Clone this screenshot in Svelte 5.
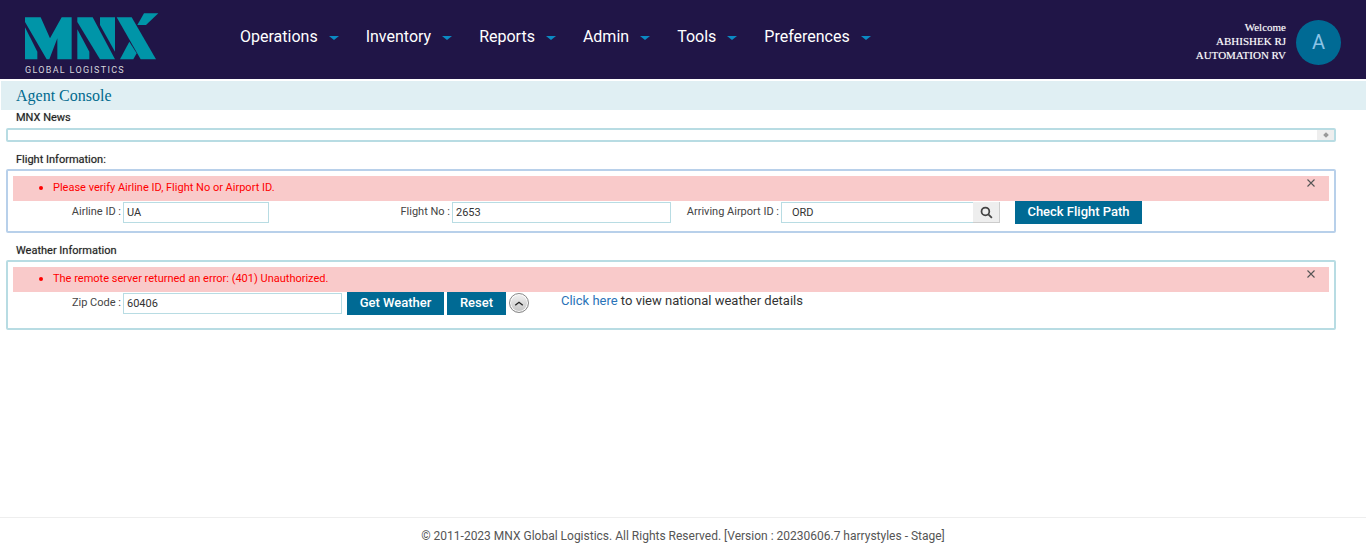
<script>
  const nav = ['Operations', 'Inventory', 'Reports', 'Admin', 'Tools', 'Preferences'];
</script>

<div class="page">
  <header class="topbar">
    <svg class="logo" viewBox="0 0 435 204" aria-label="MNX Global Logistics">
      <g fill="#0095a8">
        <polygon points="15,22 62,22 90,85 125,22 155,22 155,148 112,148 112,85 88,148 80,148 15,36" />
        <polygon points="15,52 52,125 52,148 15,148" />
        <polygon points="172,22 218,22 285,148 240,148 172,36" />
        <polygon points="172,58 208,125 208,148 172,148" />
        <polygon points="240,22 285,22 285,125 240,45" />
        <polygon points="290,22 335,22 408,148 362,148" />
        <polygon points="328,95 350,130 340,148 300,148" />
        <polygon points="372,10 415,10 378,45 352,45" />
      </g>
      <text x="15" y="190" class="logotext">GLOBAL LOGISTICS</text>
    </svg>
    <nav class="nav">
      {#each nav as item}
        <span class="navitem">{item}<i class="caret"></i></span>
      {/each}
    </nav>
    <div class="user">
      <div class="usertext">Welcome<br />ABHISHEK RJ<br />AUTOMATION RV</div>
      <div class="avatar">A</div>
    </div>
  </header>

  <div class="titlebar">Agent Console</div>

  <main class="content">
    <div class="label news-label">MNX News</div>
    <div class="newsbox"><span class="thumb"><i></i></span></div>

    <div class="label flight-label">Flight Information:</div>
    <section class="box flight">
      <div class="alert">
        <ul><li>Please verify Airline ID, Flight No or Airport ID.</li></ul>
        <svg class="close" viewBox="0 0 8 8"><path d="M0.5 0.5 7.5 7.5M7.5 0.5 0.5 7.5" /></svg>
      </div>
      <div class="row">
        <span class="fl w108">Airline ID :</span>
        <span class="input w146">UA</span>
        <span class="fl w180">Flight No :</span>
        <span class="input w219">2653</span>
        <span class="fl w107">Arriving Airport ID :</span>
        <span class="input w192 ord">ORD</span>
        <span class="search">
          <svg viewBox="0 0 12 12"><circle cx="5" cy="5" r="3.6" /><path d="M7.7 7.7 11 11" /></svg>
        </span>
        <button class="btn check">Check Flight Path</button>
      </div>
    </section>

    <div class="label weather-label">Weather Information</div>
    <section class="box weather">
      <div class="alert">
        <ul><li>The remote server returned an error: (401) Unauthorized.</li></ul>
        <svg class="close" viewBox="0 0 8 8"><path d="M0.5 0.5 7.5 7.5M7.5 0.5 0.5 7.5" /></svg>
      </div>
      <div class="row">
        <span class="fl w108">Zip Code :</span>
        <span class="input w219">60406</span>
        <button class="btn getw">Get Weather</button>
        <button class="btn reset">Reset</button>
        <span class="collapse">
          <svg viewBox="0 0 12 8"><path d="M1.5 6 6 2.5 10.500 6" /></svg>
        </span>
        <span class="details"><a href="#top">Click here</a> to view national weather details</span>
      </div>
    </section>
  </main>

  <footer class="footer">© 2011-2023 MNX Global Logistics. All Rights Reserved. [Version : 20230606.7 harrystyles - Stage]</footer>
</div>

<style>
  :global(body) {
    margin: 0;
    background: #fff;
    font-family: Roboto, sans-serif;
  }
  .page {
    height: 555px;
    display: flex;
    flex-direction: column;
    overflow: hidden;
  }
  .topbar {
    height: 79px;
    flex: none;
    background: #201547;
    display: flex;
    align-items: flex-start;
  }
  .logo {
    width: 145px;
    height: 68px;
    margin: 10px 0 0 20px;
    flex: none;
  }
  .logotext {
    font-family: Roboto, sans-serif;
    font-size: 27px;
    letter-spacing: 3.9px;
    fill: #d6d6dc;
  }
  .nav {
    display: flex;
    margin-left: 75px;
    padding-top: 27px;
    gap: 27px;
  }
  .navitem {
    color: #fff;
    font-size: 16px;
    line-height: 19px;
    display: flex;
    align-items: center;
  }
  .caret {
    width: 0;
    height: 0;
    margin-left: 11px;
    margin-top: 2px;
    border-left: 5px solid transparent;
    border-right: 5px solid transparent;
    border-top: 4px solid #0b8ac4;
  }
  .user {
    margin-left: auto;
    display: flex;
    padding: 20px 25px 0 0;
    gap: 10px;
  }
  .usertext {
    font-family: "Liberation Serif", serif;
    font-size: 11px;
    line-height: 14px;
    color: #fff;
    text-align: right;
    text-shadow: 0 0 1px rgba(255, 255, 255, 0.45);
  }
  .avatar {
    width: 45px;
    height: 45px;
    border-radius: 50%;
    background: #006a94;
    color: #8cc4e6;
    font-size: 20px;
    line-height: 45px;
    text-align: center;
  }
  .titlebar {
    flex: none;
    margin: 2px 0 0 1px;
    height: 29px;
    line-height: 29px;
    padding-left: 15px;
    background: #e0eff3;
    color: #006a8e;
    font-family: "Liberation Serif", serif;
    font-size: 16px;
  }
  .content {
    flex: 1;
    padding: 0 30px 0 6px;
  }
  .label {
    font-size: 11px;
    font-weight: 400;
    color: #222;
    line-height: 14px;
    padding-left: 10px;
    text-shadow: 0 0 1px rgba(0, 0, 0, 0.4);
  }
  .news-label {
    padding-top: 1px;
    height: 17px;
  }
  .flight-label {
    margin-top: 9px;
    height: 18px;
    padding-top: 2px;
    box-sizing: border-box;
  }
  .weather-label {
    margin-top: 9px;
    height: 18px;
    padding-top: 2px;
    box-sizing: border-box;
  }
  .newsbox {
    height: 14px;
    box-sizing: border-box;
    border: 2px solid #b8dce3;
    border-radius: 2px;
    display: flex;
    justify-content: flex-end;
  }
  .thumb {
    width: 17px;
    background: #eee;
    display: flex;
    align-items: center;
    justify-content: center;
  }
  .thumb i {
    width: 4px;
    height: 4px;
    background: #999;
    transform: rotate(45deg);
  }
  .box {
    box-sizing: border-box;
    border: 2px solid #b8d0ea;
    border-radius: 2px;
    padding: 5px;
  }
  .flight {
    height: 64px;
  }
  .weather {
    height: 70px;
    border-color: #b8dce3;
  }
  .alert {
    height: 25px;
    background: #f9caca;
    display: flex;
    color: #f00;
    font-size: 11px;
    line-height: 23px;
    justify-content: space-between;
  }
  .alert ul {
    margin: 0;
    padding: 0 0 0 26px;
    list-style: none;
  }
  .alert li {
    display: flex;
    align-items: center;
  }
  .alert li::before {
    content: "";
    width: 4px;
    height: 4px;
    border-radius: 50%;
    background: #f00;
    margin-right: 10px;
  }
  .close {
    width: 8px;
    height: 8px;
    margin: 3px 14px 0 0;
    fill: none;
    stroke: #555;
    stroke-width: 1.1;
  }
  .row {
    display: flex;
    align-items: flex-start;
    color: #444;
    font-size: 11px;
  }
  .fl {
    flex: none;
    text-align: right;
    line-height: 22px;
    padding-right: 2px;
    box-sizing: border-box;
  }
  .w108 { width: 110px; }
  .w180 { width: 183px; }
  .w107 { width: 110px; }
  .input {
    flex: none;
    box-sizing: border-box;
    height: 21px;
    margin-top: 1px;
    border: 1px solid #b8dce3;
    line-height: 20px;
    padding-left: 3px;
    color: #333;
  }
  .w146 { width: 146px; }
  .w219 { width: 219px; }
  .w192 { width: 192px; }
  .ord { padding-left: 10px; border-right: 0; }
  .search {
    flex: none;
    width: 27px;
    height: 21px;
    margin-top: 1px;
    box-sizing: border-box;
    background: #eee;
    border-right: 1px solid #ccc;
    border-bottom: 1px solid #ccc;
    display: flex;
    align-items: center;
    justify-content: center;
  }
  .search svg {
    width: 13px;
    height: 13px;
    fill: none;
    stroke: #444;
    stroke-width: 1.6;
  }
  .btn {
    flex: none;
    border: 0;
    background: #006a94;
    color: #fff;
    font-family: Roboto, sans-serif;
    font-size: 13px;
    font-weight: 500;
    height: 23px;
    padding: 0 0 2px;
  }
  .check { width: 127px; margin-left: 15px; }
  .getw { width: 97px; margin-left: 5px; }
  .reset { width: 59px; margin-left: 3px; }
  .collapse {
    flex: none;
    width: 18px;
    height: 18px;
    margin: 1px 0 0 3px;
    border-radius: 50%;
    border: 1px solid #888;
    background: linear-gradient(#f2f2f2, #c4c4c4);
    box-shadow: inset 0 0 0 1px #fff;
    display: flex;
    align-items: center;
    justify-content: center;
  }
  .collapse svg {
    width: 10px;
    height: 7px;
    fill: none;
    stroke: #222;
    stroke-width: 1.6;
  }
  .details {
    margin-left: 32px;
    margin-top: 1px;
    font-size: 13px;
    line-height: 16px;
    color: #333;
  }
  .details a {
    color: #2a73b8;
    text-decoration: none;
  }
  .footer {
    flex: none;
    height: 38px;
    box-sizing: border-box;
    border-top: 1px solid #eee;
    text-align: center;
    font-size: 12px;
    line-height: 35px;
    color: #555;
    padding-top: 1px;
  }
</style>
